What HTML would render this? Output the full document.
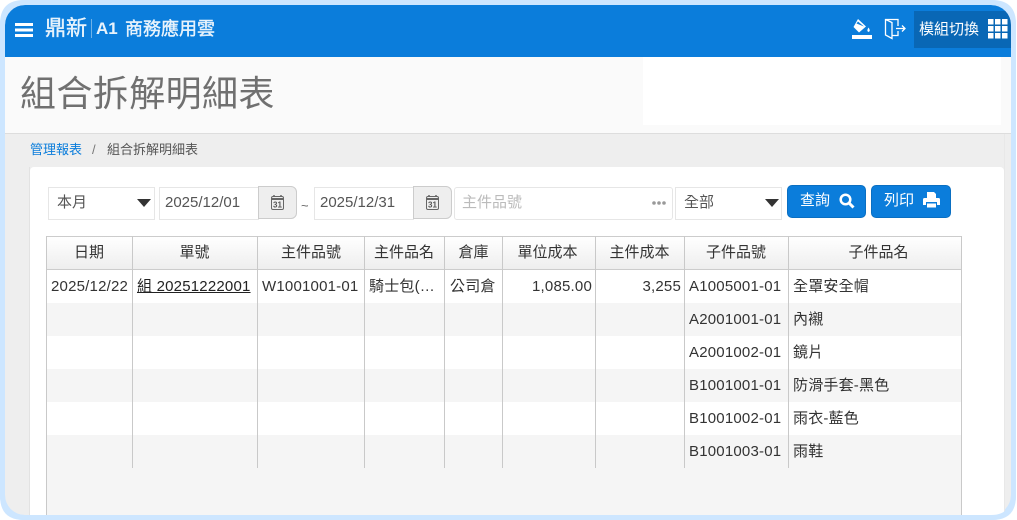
<!DOCTYPE html>
<html lang="zh-Hant"><head><meta charset="utf-8"><style>
*{box-sizing:border-box}
html,body{margin:0;padding:0;width:1017px;height:520px;overflow:hidden;background:#fff}
body{position:relative;font-family:"Liberation Sans","Noto Sans CJK TC",sans-serif;color:#333}
.a{position:absolute;white-space:nowrap}
#f{position:absolute;left:5px;top:5px;width:1006px;height:510px;border-radius:20px;overflow:hidden;background:#eee}
.in{position:absolute;background:#fff;border:1px solid #e6e6e6;height:33px;font-size:15px;line-height:29px;color:#555}
.arr{position:absolute;width:0;height:0;border-left:7px solid transparent;border-right:7px solid transparent;border-top:8px solid #333}
.cal{position:absolute;background:#eee;border:1px solid #ccc;border-radius:0 6px 6px 0;height:33px;width:39px}
.btn{position:absolute;background:#0b7ddb;border:1px solid #0a6fc2;border-radius:5px;height:33px;color:#fff;font-size:15px;line-height:29px}
.h{position:absolute;top:236px;height:34px;background:linear-gradient(#fff,#eee);border-top:1px solid #ccc;border-bottom:1px solid #ccc;font-size:15px;line-height:32px;text-align:center;color:#333}
.v{position:absolute;width:1px;background:#c9c9c9}
.c{position:absolute;font-size:15px;line-height:34px;white-space:nowrap;color:#333;letter-spacing:.2px}
.z{letter-spacing:.2px}
</style></head><body>
<div class="a" style="left:0;top:0;width:1016px;height:520px;background:#cde6ff;border-radius:24px"></div>
<div id="f">
<div class="a" style="left:0;top:0;width:1006px;height:52px;background:#0b7ddb"></div>
<div class="a" style="left:909px;top:6px;width:97px;height:37px;background:#0967b5"></div>
<div class="a" style="left:0;top:52px;width:1006px;height:76px;background:#fafafa"></div>
<div class="a" style="left:638px;top:52px;width:358px;height:68px;background:#fff"></div>
<div class="a" style="left:0;top:128px;width:1006px;height:1px;background:#ddd"></div>
</div>
<svg class="a" style="left:15px;top:23px" width="18" height="14" fill="#fff"><rect y="0" width="18" height="3"/><rect y="5.500" width="18" height="3"/><rect y="11" width="18" height="3"/></svg>
<div class="a" style="left:45px;top:16px;font-size:21px;line-height:26px;color:#e8f3fc;-webkit-text-stroke:.4px #e8f3fc">鼎新</div>
<div class="a" style="left:91px;top:19px;width:1px;height:19px;background:#6fb2e8"></div>
<div class="a" style="left:96px;top:17px;font-size:17px;line-height:24px;color:#e8f3fc;font-weight:700">A1</div>
<div class="a" style="left:125px;top:17px;font-size:18px;line-height:24px;color:#e8f3fc;-webkit-text-stroke:.4px #e8f3fc">商務應用雲</div>
<svg class="a" style="left:851px;top:18px" width="23" height="23" viewBox="0 0 23 23"><path d="M7 1 15 8.500 8 14.500 2.500 9Z" fill="#fff"/><path d="M5.500 5.500 13 8.500 7 3.500Z" fill="#0b7ddb"/><path d="M17.500 9.500Q20 13 17.500 14Q15.200 13 17.500 9.500Z" fill="#fff"/><rect x="1" y="17" width="20" height="4" fill="#fff"/></svg>
<svg class="a" style="left:884px;top:18px" width="23" height="22" viewBox="0 0 23 22" fill="none" stroke="#fff" stroke-width="1.300"><path d="M14 8V1.500H1.500V17L8 20.500V4.500L1.500 1.500M8 17.500H14V13"/><path d="M12 10.500H21M18 7.500 21 10.500 18 13.500"/></svg>
<div class="a" style="left:919px;top:19px;font-size:15px;line-height:22px;color:#fff">模組切換</div>
<svg class="a" style="left:988px;top:19px" width="20" height="20" fill="#fff"><rect x="0" y="0" width="5.500" height="5.500"/><rect x="7" y="0" width="5.500" height="5.500"/><rect x="14" y="0" width="5.500" height="5.500"/><rect x="0" y="7" width="5.500" height="5.500"/><rect x="7" y="7" width="5.500" height="5.500"/><rect x="14" y="7" width="5.500" height="5.500"/><rect x="0" y="14" width="5.500" height="5.500"/><rect x="7" y="14" width="5.500" height="5.500"/><rect x="14" y="14" width="5.500" height="5.500"/></svg>
<div class="a" style="left:20px;top:67px;font-size:36px;line-height:54px;color:#707070;letter-spacing:.4px">組合拆解明細表</div>
<div class="a" style="left:30px;top:141px;font-size:13px;line-height:18px;color:#0b7ddb">管理報表</div>
<div class="a" style="left:92px;top:141px;font-size:13px;line-height:18px;color:#777">/</div>
<div class="a" style="left:107px;top:141px;font-size:13px;line-height:18px;color:#555">組合拆解明細表</div>
<div class="a" style="left:30px;top:167px;width:974px;height:348px;background:#fff;border-radius:4px 4px 0 0"></div>
<div class="a" style="left:1004px;top:134px;width:1px;height:381px;background:#e8e8e8"></div>
<div class="a" style="left:29px;top:167px;width:1px;height:348px;background:#e2e2e2"></div>

<div class="in" style="left:48px;top:187px;width:107px;padding-left:8px">本月</div>
<div class="arr" style="left:137px;top:199px"></div>
<div class="in" style="left:159px;top:187px;width:100px;padding-left:5px">2025/12/01</div>
<div class="cal" style="left:258px;top:186px"></div>
<svg class="a" style="left:270px;top:194px" width="15" height="17" fill="none" stroke="#666"><rect x="1.500" y="2.500" width="12" height="13" rx="1.500"/><path d="M1.500 5H13.500" stroke-width="2"/><path d="M4 1V3M11 1V3" stroke-width="1.500"/><text x="3" y="13.500" font-size="8" font-weight="700" fill="#555" stroke="none" font-family="Liberation Sans">31</text></svg>
<div class="a" style="left:301px;top:197px;font-size:13px;line-height:18px;color:#666">~</div>
<div class="in" style="left:314px;top:187px;width:100px;padding-left:5px">2025/12/31</div>
<div class="cal" style="left:413px;top:186px"></div>
<svg class="a" style="left:425px;top:194px" width="15" height="17" fill="none" stroke="#666"><rect x="1.500" y="2.500" width="12" height="13" rx="1.500"/><path d="M1.500 5H13.500" stroke-width="2"/><path d="M4 1V3M11 1V3" stroke-width="1.500"/><text x="3" y="13.500" font-size="8" font-weight="700" fill="#555" stroke="none" font-family="Liberation Sans">31</text></svg>
<div class="in" style="left:454px;top:187px;width:219px;padding-left:7px;color:#bbb;border-radius:3px">主件品號</div>
<svg class="a" style="left:652px;top:200px" width="14" height="6" fill="#999"><circle cx="2" cy="3" r="1.800"/><circle cx="7" cy="3" r="1.800"/><circle cx="12" cy="3" r="1.800"/></svg>
<div class="in" style="left:675px;top:187px;width:107px;padding-left:8px">全部</div>
<div class="arr" style="left:765px;top:199px"></div>
<div class="btn" style="left:787px;top:185px;width:79px;padding-left:12px">查詢</div>
<svg class="a" style="left:839px;top:193px" width="16" height="16" fill="none" stroke="#fff" stroke-width="2.500"><circle cx="6.500" cy="6.500" r="4.800"/><path d="M10 10 14.500 14.500" stroke-width="3"/></svg>
<div class="btn" style="left:871px;top:185px;width:80px;padding-left:12px">列印</div>
<svg class="a" style="left:923px;top:192px" width="17" height="16" fill="#fff"><path d="M4 0H11L13 2V6H4Z"/><path d="M0 7.500Q0 6 1.500 6H15.500Q17 6 17 7.500V13H14V10H3V13H0Z"/><rect x="4" y="11.500" width="9" height="4"/></svg>

<div class="a" style="left:47px;top:303px;width:914px;height:33px;background:#f5f5f5"></div>
<div class="a" style="left:47px;top:369px;width:914px;height:33px;background:#f5f5f5"></div>
<div class="a" style="left:47px;top:435px;width:914px;height:80px;background:#f5f5f5"></div>

<div class="h" style="left:46px;width:87px;padding-right:1px">日期</div>
<div class="h" style="left:132px;width:126px;padding-right:1px">單號</div>
<div class="h" style="left:257px;width:108px">主件品號</div>
<div class="h" style="left:364px;width:81px;padding-right:1px">主件品名</div>
<div class="h" style="left:444px;width:59px">倉庫</div>
<div class="h" style="left:502px;width:94px;padding-right:3px">單位成本</div>
<div class="h" style="left:595px;width:90px;padding-right:1px">主件成本</div>
<div class="h" style="left:684px;width:105px;padding-right:1px">子件品號</div>
<div class="h" style="left:788px;width:174px;padding-left:7px">子件品名</div>
<div class="v" style="left:46px;top:236px;height:279px"></div>
<div class="v" style="left:961px;top:236px;height:279px"></div>
<div class="v" style="left:132px;top:236px;height:232px"></div>
<div class="v" style="left:257px;top:236px;height:232px"></div>
<div class="v" style="left:364px;top:236px;height:232px"></div>
<div class="v" style="left:444px;top:236px;height:232px"></div>
<div class="v" style="left:502px;top:236px;height:232px"></div>
<div class="v" style="left:595px;top:236px;height:232px"></div>
<div class="v" style="left:684px;top:236px;height:232px"></div>
<div class="v" style="left:788px;top:236px;height:232px"></div>

<div class="c" style="left:51px;top:270px">2025/12/22</div>
<div class="c" style="left:137px;top:270px;text-decoration:underline;color:#222">組 20251222001</div>
<div class="c" style="left:262px;top:270px">W1001001-01</div>
<div class="c" style="left:369px;top:270px">騎士包(…</div>
<div class="c z" style="left:450px;top:270px">公司倉</div>
<div class="c" style="left:502px;top:270px;width:90px;text-align:right">1,085.00</div>
<div class="c" style="left:595px;top:270px;width:86px;text-align:right">3,255</div>
<div class="c" style="left:689px;top:270px">A1005001-01</div>
<div class="c z" style="left:793px;top:270px">全罩安全帽</div>
<div class="c" style="left:689px;top:303px">A2001001-01</div>
<div class="c z" style="left:793px;top:303px">內襯</div>
<div class="c" style="left:689px;top:336px">A2001002-01</div>
<div class="c z" style="left:793px;top:336px">鏡片</div>
<div class="c" style="left:689px;top:369px">B1001001-01</div>
<div class="c z" style="left:793px;top:369px">防滑手套-黑色</div>
<div class="c" style="left:689px;top:402px">B1001002-01</div>
<div class="c z" style="left:793px;top:402px">雨衣-藍色</div>
<div class="c" style="left:689px;top:435px">B1001003-01</div>
<div class="c z" style="left:793px;top:435px">雨鞋</div>

<svg class="a" style="left:0;top:0;pointer-events:none" width="1017" height="520"><path fill-rule="evenodd" fill="#cde6ff" d="M24 0H992Q1016 0 1016 24V496Q1016 520 992 520H24Q0 520 0 496V24Q0 0 24 0ZM25 5Q5 5 5 25V495Q5 515 25 515H991Q1011 515 1011 495V25Q1011 5 991 5Z"/></svg>
</body></html>
